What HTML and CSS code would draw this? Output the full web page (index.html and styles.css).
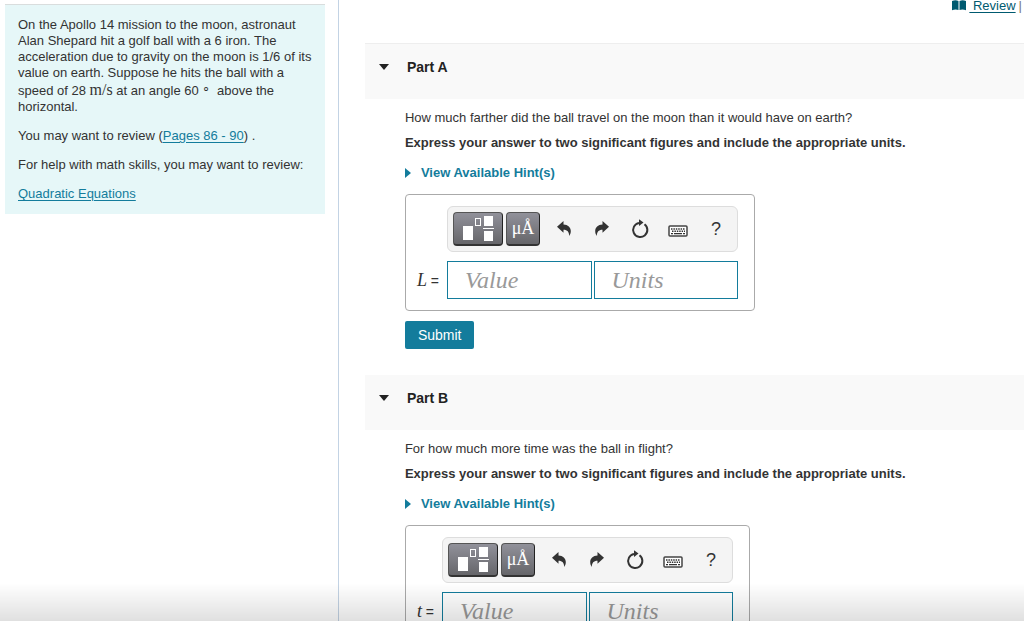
FILE: index.html
```
<!DOCTYPE html>
<html lang="en">
<head>
    <meta charset="UTF-8">
    <meta name="viewport" content="width=device-width, initial-scale=1.0">
    <title>Golf on the Moon</title>
    <link rel="stylesheet" href="styles.css">
</head>
<body>
    <!-- Icons shared by both answer toolbars -->
    <svg class="sprite" aria-hidden="true">
        <symbol id="icon-template" viewBox="0 0 32 26">
            <rect x="1" y="10" width="10" height="14" fill="#fff"/>
            <rect x="13.5" y="2.5" width="5" height="7" fill="none" stroke="#fff"/>
            <rect x="22" y="0" width="9" height="10" fill="#fff"/>
            <rect x="21" y="12" width="11" height="1" fill="#fff"/>
            <rect x="22" y="15" width="9" height="10" fill="#fff"/>
        </symbol>
        <symbol id="icon-undo" viewBox="0 0 14 16">
            <path d="M0 5.800 6.500 0V3.400C11 3.600 13.800 6.400 13.800 10c0 2-.6 3.400-1.600 5C12 11 10.500 8.800 6.500 8.800v3z" fill="#333"/>
        </symbol>
        <symbol id="icon-redo" viewBox="0 0 14 16">
            <path d="M14 5.800 7.500 0V3.400C3 3.600 .2 6.400 .2 10c0 2 .6 3.400 1.600 5C2 11 3.500 8.800 7.500 8.800v3z" fill="#333"/>
        </symbol>
        <symbol id="icon-reset" viewBox="0 0 18 20">
            <path d="M13.500 5.200A7.100 7.100 0 1 1 8 3.900" fill="none" stroke="#333" stroke-width="2"/>
            <path d="M8 0.300 12.500 3.600 8 7z" fill="#333"/>
        </symbol>
        <symbol id="icon-keyboard" viewBox="0 0 20 12">
            <rect x="1" y="1" width="18" height="10" rx="1" fill="#fff" stroke="#444" stroke-width="1.500"/>
            <path d="M3 4h14M4 6.300h13" stroke="#333" stroke-width="1.400" stroke-dasharray="1.500 .9"/>
            <path d="M3 8.700h2M6 8.700h8M15 8.700h2" stroke="#333" stroke-width="1.300"/>
        </symbol>
    </svg>

    <div class="page">
        <!-- Problem statement -->
        <aside class="sidebar">
            <div class="problem">
                <p>On the Apollo 14 mission to the moon, astronaut Alan Shepard hit a golf ball with a 6 iron. The acceleration due to gravity on the moon is 1/6 of its value on earth. Suppose he hits the ball with a speed of 28 <span class="math">m/s</span> at an angle 60 <span class="degree">&#8728;</span> above the horizontal.</p>
                <p>You may want to review (<a href="#">Pages 86 - 90</a>) .</p>
                <p>For help with math skills, you may want to review:</p>
                <p><a href="#">Quadratic Equations</a></p>
            </div>
        </aside>

        <main>
            <div class="top-links">
                <svg width="14" height="11" viewBox="0 0 14 11" aria-hidden="true">
                    <path d="M0 1Q3.500-.5 6.500 1V10Q3.500 9 0 10.200zM7.500 1Q10.500-.5 14 1V10.200Q10.500 9 7.500 10z" fill="#005a70"/>
                </svg>
                <a href="#">&nbsp;Review</a>
                <span class="divider">|</span>
            </div>

            <!-- Part A -->
            <section class="part">
                <h2><span class="arrow-down"></span>Part A</h2>
                <div class="part-body">
                    <p>How much farther did the ball travel on the moon than it would have on earth?</p>
                    <p class="instruction">Express your answer to two significant figures and include the appropriate units.</p>
                    <a class="hints" href="#">View Available Hint(s)</a>
                    <form class="answer">
                        <div class="toolbar">
                            <button type="button" class="dark-button wide" aria-label="Templates"><svg width="32" height="26"><use href="#icon-template"/></svg></button>
                            <button type="button" class="dark-button" aria-label="Symbols">&mu;&Aring;</button>
                            <button type="button" class="icon-button first" aria-label="Undo"><svg width="14" height="16"><use href="#icon-undo"/></svg></button>
                            <button type="button" class="icon-button" aria-label="Redo"><svg width="14" height="16"><use href="#icon-redo"/></svg></button>
                            <button type="button" class="icon-button" aria-label="Reset"><svg width="18" height="20"><use href="#icon-reset"/></svg></button>
                            <button type="button" class="icon-button keyboard" aria-label="Keyboard shortcuts"><svg width="20" height="12"><use href="#icon-keyboard"/></svg></button>
                            <button type="button" class="icon-button" aria-label="Help">?</button>
                        </div>
                        <label for="valueA"><i>L</i> =</label>
                        <div class="fields">
                            <input type="text" id="valueA" placeholder="Value">
                            <input type="text" id="unitsA" placeholder="Units" aria-label="Units">
                        </div>
                    </form>
                    <button type="button" class="submit">Submit</button>
                </div>
            </section>

            <!-- Part B -->
            <section class="part">
                <h2><span class="arrow-down"></span>Part B</h2>
                <div class="part-body">
                    <p>For how much more time was the ball in flight?</p>
                    <p class="instruction">Express your answer to two significant figures and include the appropriate units.</p>
                    <a class="hints" href="#">View Available Hint(s)</a>
                    <form class="answer">
                        <div class="toolbar">
                            <button type="button" class="dark-button wide" aria-label="Templates"><svg width="32" height="26"><use href="#icon-template"/></svg></button>
                            <button type="button" class="dark-button" aria-label="Symbols">&mu;&Aring;</button>
                            <button type="button" class="icon-button first" aria-label="Undo"><svg width="14" height="16"><use href="#icon-undo"/></svg></button>
                            <button type="button" class="icon-button" aria-label="Redo"><svg width="14" height="16"><use href="#icon-redo"/></svg></button>
                            <button type="button" class="icon-button" aria-label="Reset"><svg width="18" height="20"><use href="#icon-reset"/></svg></button>
                            <button type="button" class="icon-button keyboard" aria-label="Keyboard shortcuts"><svg width="20" height="12"><use href="#icon-keyboard"/></svg></button>
                            <button type="button" class="icon-button" aria-label="Help">?</button>
                        </div>
                        <label for="valueB"><i>t</i> =</label>
                        <div class="fields">
                            <input type="text" id="valueB" placeholder="Value">
                            <input type="text" id="unitsB" placeholder="Units" aria-label="Units">
                        </div>
                    </form>
                </div>
            </section>
        </main>
    </div>
    <div class="bottom-shade"></div>
</body>
</html>
```
FILE: styles.css
```
* {
    margin: 0;
    padding: 0;
    box-sizing: border-box;
}
body {
    font-family: "Liberation Sans", Arial, sans-serif;
    font-size: 13px;
    line-height: 16px;
    color: #333;
    background: #fff;
    overflow: hidden;
}
a {
    color: #137c9c;
    text-underline-offset: 2px;
}
.sprite {
    display: none;
}
.page {
    display: flex;
    height: 100vh;
}
/* Problem statement */
.sidebar {
    width: 33%;
    flex-shrink: 0;
    padding: 4px 13px 0 5px;
}
.problem {
    padding: 12px 12px 12px 13px;
    background: #e6f7f8;
    border-top: 1px solid #d9dddd;
}
.problem p + p {
    margin-top: 13px;
}
.math {
    font-family: "Liberation Serif", serif;
    font-size: 16px;
    line-height: 1;
}
.degree {
    margin-right: 3px;
    font-size: 13px;
    vertical-align: 3px;
    line-height: 1;
}
/* Answer column */
main {
    flex: 1;
    padding-left: 26px;
    border-left: 1px solid #c3d3e4;
    overflow: hidden;
}
.top-links {
    display: flex;
    justify-content: flex-end;
    align-items: center;
    gap: 3px;
    height: 43px;
    padding: 0 2px 32px 0;
    line-height: 12px;
}
.top-links a {
    color: #005a70;
}
.divider {
    color: #777;
}
.part {
    margin-bottom: 26px;
}
.part h2 {
    display: flex;
    align-items: center;
    height: 55px;
    padding: 0 0 10px 14px;
    font-size: 14px;
    color: #222;
    background: #f9f9f9;
}
.top-links + .part h2 {
    height: 56px;
    border-top: 1px solid #eee;
}
.arrow-down {
    margin-right: 18px;
    border: 5px solid transparent;
    border-top: 6px solid #222;
    border-bottom: 0;
}
.part-body {
    display: flex;
    flex-direction: column;
    align-items: flex-start;
    padding: 11px 0 0 40px;
}
.instruction {
    margin-top: 9px;
    font-weight: bold;
}
.hints {
    display: flex;
    align-items: center;
    gap: 10px;
    margin: 14px 0 13px;
    font-weight: bold;
    text-decoration: none;
}
.hints::before {
    content: "";
    border: 5px solid transparent;
    border-left: 6px solid #137c9c;
    border-right: 0;
}
.answer {
    display: grid;
    grid-template-columns: auto 291px;
    row-gap: 9px;
    padding: 11px 16px 11px 11px;
    border: 1px solid #aaa;
    border-radius: 4px;
}
.toolbar {
    grid-column: 2;
    display: flex;
    align-items: center;
    height: 46px;
    padding: 0 5px;
    background: #f4f4f4;
    border: 1px solid #ddd;
    border-radius: 6px;
}
.dark-button {
    display: flex;
    justify-content: center;
    align-items: center;
    flex-shrink: 0;
    width: 34px;
    height: 34px;
    font-family: "Liberation Serif", serif;
    font-size: 18px;
    color: #fff;
    background: linear-gradient(#91919a, #66666a);
    border: 1px solid #555;
    border-right-color: #222;
    border-bottom: 2px solid #333;
    border-radius: 4px;
    cursor: pointer;
}
.wide {
    width: 50px;
    margin-right: 3px;
}
.icon-button {
    display: flex;
    justify-content: center;
    align-items: center;
    flex-shrink: 0;
    width: 38px;
    height: 34px;
    font-family: "Liberation Sans", Arial, sans-serif;
    font-size: 18px;
    color: #333;
    background: none;
    border: 0;
    cursor: pointer;
}
.first {
    margin-left: 5px;
}
.keyboard {
    padding-top: 3px;
}
.answer label {
    grid-column: 1;
    align-self: center;
    padding-right: 8px;
    font-size: 14px;
}
.answer label i {
    font-family: "Liberation Serif", serif;
    font-size: 18px;
}
.fields {
    display: flex;
    gap: 2px;
}
.fields input {
    flex: 1;
    min-width: 0;
    height: 38px;
    padding: 0 17px;
    font-family: "Liberation Serif", serif;
    font-size: 24px;
    font-style: italic;
    border: 1px solid #137c9c;
}
.fields input::placeholder {
    color: #999;
}
.submit {
    height: 28px;
    margin-top: 10px;
    padding: 0 13px;
    font-family: inherit;
    font-size: 14px;
    color: #fff;
    background: #137c9c;
    border: 0;
    border-radius: 2px;
    cursor: pointer;
}
/* Fade along the bottom edge of the window */
.bottom-shade {
    position: fixed;
    left: 0;
    right: 0;
    bottom: 0;
    height: 38px;
    background: linear-gradient(transparent, rgba(0, 0, 0, 0.12));
    pointer-events: none;
}
```
